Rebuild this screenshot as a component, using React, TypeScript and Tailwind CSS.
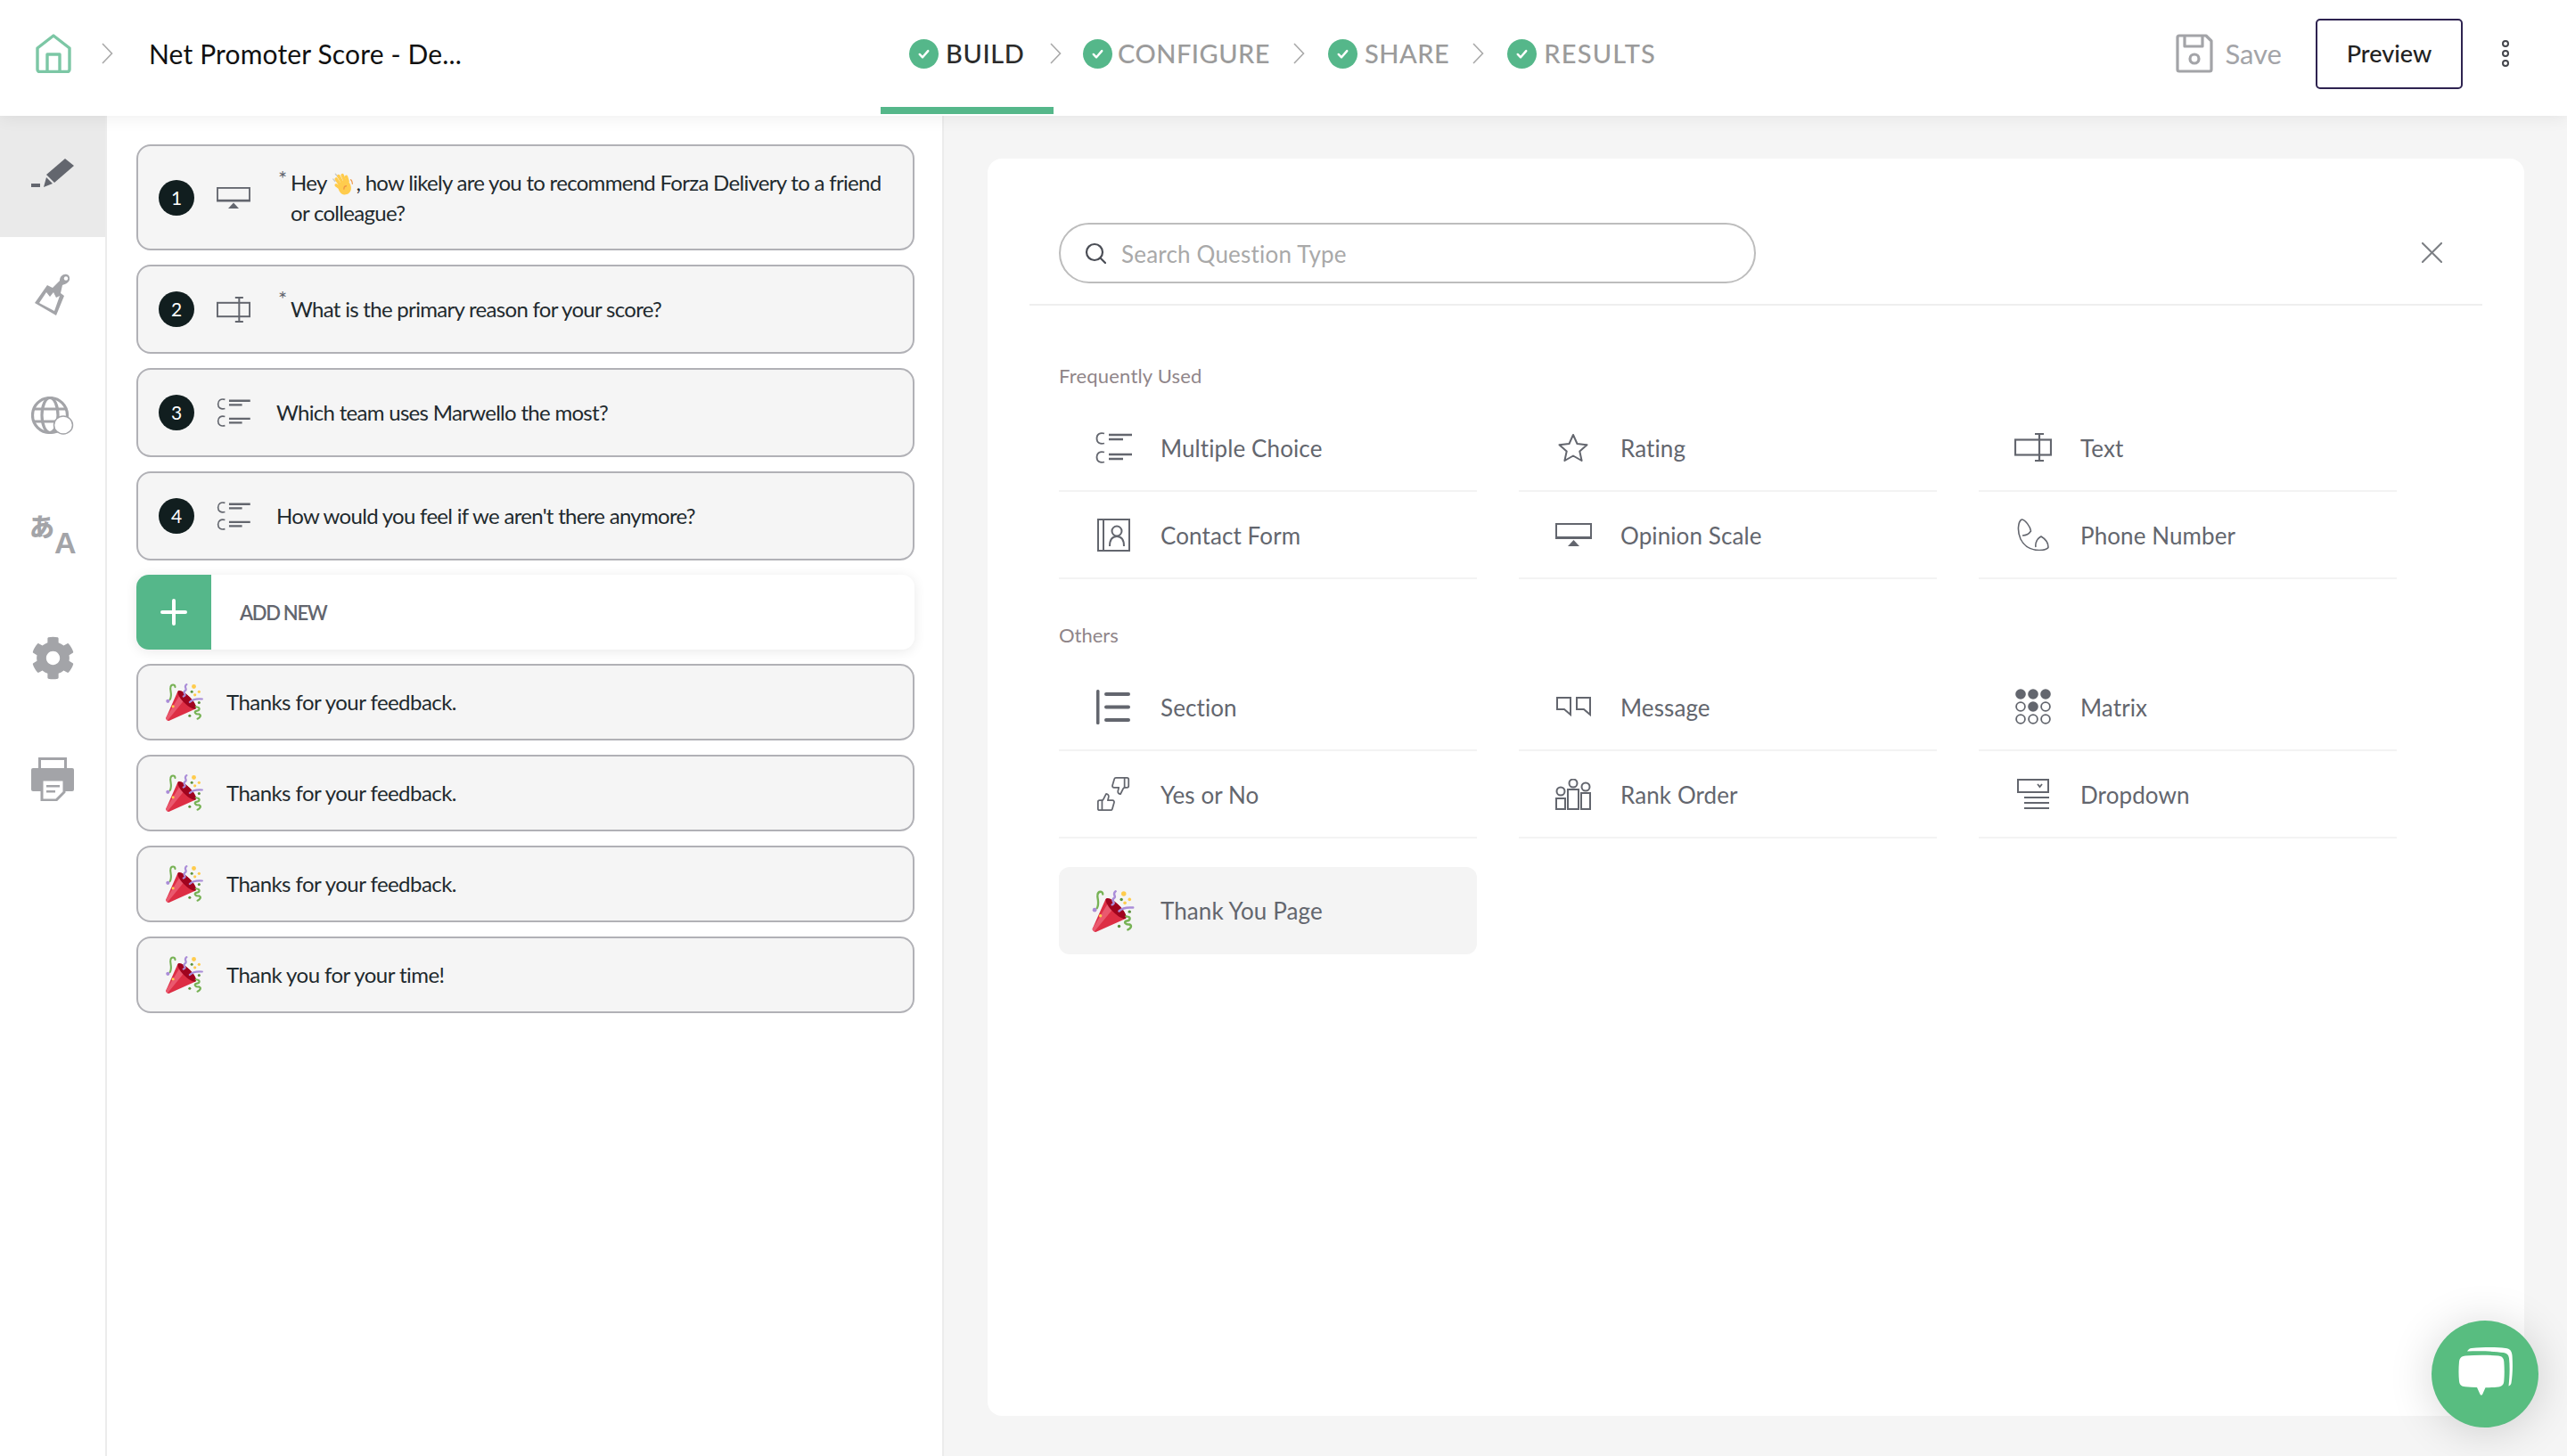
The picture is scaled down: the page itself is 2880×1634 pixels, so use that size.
import { FaCog } from "react-icons/fa"

const Popper = ({ className }: { className: string }) => (
  <svg viewBox="0 0 36 36" className={className} fill="none">
    <path fill="#DD2E44" d="M11.626 7.488c-.112.112-.197.247-.268.395l-.008-.008L.134 33.141l.011.011c-.208.403.14 1.223.853 1.937.713.713 1.533 1.061 1.936.853l.01.01L28.21 24.735l-.008-.009c.147-.07.282-.155.395-.269 1.562-1.562-.971-6.627-5.656-11.313-4.687-4.686-9.752-7.218-11.315-5.656z" />
    <path fill="#EA596E" d="M13 12L.416 32.506l-.282.635.011.011c-.208.403.14 1.223.853 1.937.232.232.473.408.709.557L17 17l-4-5z" />
    <path fill="#A0041E" d="M23.012 13.066c4.67 4.672 7.263 9.652 5.789 11.124-1.473 1.474-6.453-1.118-11.126-5.788-4.671-4.672-7.263-9.654-5.79-11.127 1.474-1.473 6.454 1.119 11.127 5.791z" />
    <path stroke="#77B255" strokeWidth="1.800" strokeLinecap="round" d="M4 15.500C6.500 11 4 7 4.500 4c.5-3.500 4.500-3.500 4.500-.5" />
    <path stroke="#AA8DD8" strokeWidth="1.900" strokeLinecap="round" d="M17 12.500c4-1.500-1.500-3.500 1.500-5.500C21.500 5.500 16.500 3.500 20 1" />
    <path stroke="#AA8DD8" strokeWidth="1.900" strokeLinecap="round" d="M23 18c3-3 7-3.500 12-3" />
    <path stroke="#77B255" strokeWidth="1.900" strokeLinecap="round" d="M29 22.500c5 .5 3.500 3.500.5 4-3 .5-1 3.500 2.500 3 2.500 1 1 3.500-1.500 4.500" />
    <circle cx="2" cy="17" r="1.800" fill="#AA8DD8" />
    <circle cx="7" cy="22" r="1.300" fill="#FFCC4D" />
    <circle cx="27" cy="3" r="2.100" fill="#FFCC4D" />
    <circle cx="32" cy="8" r="1.400" fill="#FFCC4D" />
    <circle cx="28" cy="11" r="1.400" fill="#FFCC4D" />
    <circle cx="25" cy="8" r="1.300" fill="#5C913B" />
    <circle cx="32" cy="18.500" r="1.300" fill="#5C913B" />
    <circle cx="23" cy="31" r="1.300" fill="#5C913B" />
  </svg>
)

const Wave = () => (
  <svg viewBox="0 0 30 30" className="mx-[1px] inline-block h-[26px] w-[26px] align-[-6px]" fill="none">
    <path stroke="#c9c9c9" strokeWidth="1.500" strokeLinecap="round" d="M5 1.500 9 6M2 8l2.500 3" />
    <g stroke="#FFCC4D" strokeWidth="4" strokeLinecap="round">
      <path d="M10 14 6 8" />
      <path d="M13 11 9 4" />
      <path d="M17 10 14 3" />
      <path d="M21 11 19 5" />
      <path d="M10 19 6 16" />
    </g>
    <path fill="#FFCC4D" d="M9 15c2-4 8-6 12-4 3 2 5 7 4 11-1 5-6 7-10 6-4-1-8-8-6-13z" />
    <path stroke="#EF9645" strokeWidth="1.500" strokeLinecap="round" d="M25 9c1 1 2 3 2 5M19 17c-2 0-3 2-3 4" />
  </svg>
)

const MultiIcon = ({ className }: { className: string }) => (
  <svg viewBox="0 0 41 35" className={className} fill="none" stroke="currentColor">
    <path strokeWidth="1.800" d="M10 1.500C5 0 1.500 2.500 1.500 7S5 14 10 12.500M10 22.500C5 21 1.500 23.500 1.500 28S5 35 10 33.500" />
    <path strokeWidth="2.500" d="M15 3h26M15 8h16M15 25h26M15 30h16" />
  </svg>
)
const ScaleIcon = ({ className }: { className: string }) => (
  <svg viewBox="0 0 41 26" className={className} fill="none">
    <rect x="1" y="1" width="39" height="15" stroke="currentColor" strokeWidth="2" />
    <path d="M0 15.500h41v2.500H0z" fill="currentColor" />
    <path d="M20.500 19 27 26H14z" fill="currentColor" />
  </svg>
)
const TextIcon = ({ className }: { className: string }) => (
  <svg viewBox="0 0 42 32" className={className} fill="none" stroke="currentColor" strokeWidth="2.200">
    <rect x="1" y="7.500" width="40" height="17" />
    <path d="M28 1v30M23 1h10M23 31h10" />
  </svg>
)
const StarIcon = ({ className }: { className: string }) => (
  <svg viewBox="0 0 34 32" className={className} fill="none" stroke="currentColor" strokeWidth="2" strokeLinejoin="round">
    <path d="M17 2l4.500 10 11 1.200-8.200 7.300L26.600 31 17 25.500 7.400 31l2.300-10.500L1.500 13.200l11-1.200z" />
  </svg>
)
const ContactIcon = ({ className }: { className: string }) => (
  <svg viewBox="0 0 37 37" className={className} fill="none" stroke="currentColor" strokeWidth="2">
    <rect x="1" y="1" width="35" height="35" />
    <path d="M7 1v35" />
    <circle cx="22" cy="14" r="5.500" />
    <path d="M14 31c0-8 3-11 8-11s8 3 8 11" />
  </svg>
)
const PhoneIcon = ({ className }: { className: string }) => (
  <svg viewBox="0 0 36 36" className={className} fill="none" stroke="currentColor" strokeWidth="1.600" strokeLinejoin="round">
    <path d="M5 1C1 4 0 14 4 23c4 8 12 12.500 21 12.500 5 0 10-1.500 10-3.500 0-4-3-9-8-12-4 2-7 7-6 12" />
    <path d="M5 1c4 0 10 8 10.500 13-2 3-6 5-9.500 5" />
  </svg>
)
const SectionIcon = ({ className }: { className: string }) => (
  <svg viewBox="0 0 38 39" className={className} fill="currentColor">
    <rect x="0" y="0" width="3.500" height="39" rx="1.500" />
    <rect x="9" y="3" width="29" height="4" rx="2" />
    <rect x="9" y="17.500" width="29" height="4" rx="2" />
    <rect x="9" y="32" width="29" height="4" rx="2" />
  </svg>
)
const MessageIcon = ({ className }: { className: string }) => (
  <svg viewBox="0 0 39 22" className={className} fill="none" stroke="currentColor" strokeWidth="2">
    <path d="M1 1h15v19l-7-6H1zM23 1h15v19l-7-6h-8z" />
  </svg>
)
const YesNoIcon = ({ className }: { className: string }) => (
  <svg viewBox="0 0 38 40" className={className} fill="none" stroke="currentColor" strokeWidth="1.900" strokeLinejoin="round" strokeLinecap="round">
    <g transform="translate(0 18) scale(.92)">
      <path d="M7 10v12" />
      <path d="M15 5.880 14 10h5.830a2 2 0 0 1 1.920 2.560l-2.330 8A2 2 0 0 1 17.500 22H4a2 2 0 0 1-2-2v-8a2 2 0 0 1 2-2h2.760a2 2 0 0 0 1.790-1.110L12 2a3.130 3.130 0 0 1 3 3.880Z" />
    </g>
    <g transform="translate(16 0) scale(.92)">
      <path d="M17 14V2" />
      <path d="M9 18.120 10 14H4.170a2 2 0 0 1-1.920-2.560l2.330-8A2 2 0 0 1 6.500 2H20a2 2 0 0 1 2 2v8a2 2 0 0 1-2 2h-2.760a2 2 0 0 0-1.790 1.110L12 22a3.130 3.130 0 0 1-3-3.880Z" />
    </g>
  </svg>
)
const RankIcon = ({ className }: { className: string }) => (
  <svg viewBox="0 0 40 35" className={className} fill="none" stroke="currentColor" strokeWidth="2">
    <circle cx="20" cy="5" r="4.500" />
    <rect x="14" y="12" width="12" height="22" />
    <circle cx="6" cy="14" r="4.500" />
    <rect x="1" y="22" width="10" height="12" />
    <circle cx="34" cy="9" r="4.500" />
    <rect x="29" y="16" width="10" height="18" />
  </svg>
)
const MatrixIcon = ({ className }: { className: string }) => (
  <svg viewBox="0 0 40 40" className={className}>
    {[6, 20, 34].map((cy, r) =>
      [6, 20, 34].map((cx, c) => {
        const filled = r === 0 || (r === 1 && c === 1)
        return (
          <circle
            key={`${r}-${c}`}
            cx={cx}
            cy={cy}
            r={filled ? 5.800 : 4.900}
            fill={filled ? "currentColor" : "none"}
            stroke={filled ? "none" : "currentColor"}
            strokeWidth="1.800"
          />
        )
      }),
    )}
  </svg>
)
const DropdownIcon = ({ className }: { className: string }) => (
  <svg viewBox="0 0 36 34" className={className} fill="none" stroke="currentColor">
    <rect x="1" y="1" width="34" height="14" strokeWidth="2" />
    <path strokeWidth="1.800" d="M23 6l2.500 3L28 6" />
    <path strokeWidth="2.200" d="M8 21h28M8 27h28M8 33h28" />
  </svg>
)

const Check = () => (
  <span className="flex h-[33px] w-[33px] shrink-0 items-center justify-center rounded-full bg-[#55b78a]">
    <svg viewBox="0 0 20 20" className="h-[19px] w-[19px]" fill="none" stroke="#fff" strokeWidth="2.600" strokeLinecap="round" strokeLinejoin="round">
      <path d="M5 10.500l3.500 3.500L15 6.500" />
    </svg>
  </span>
)

const Chevron = ({ className }: { className: string }) => (
  <svg viewBox="0 0 13 24" className={className} fill="none" stroke="#a9a9a9" strokeWidth="1.600">
    <path d="M1 1l10.500 11L1 23" />
  </svg>
)

function Header() {
  return (
    <header className="relative z-10 flex h-[130px] shrink-0 items-start bg-white shadow-[0_2px_18px_rgba(0,0,0,0.07)]">
      <div className="flex h-[120px] w-[988px] shrink-0 items-center">
        <svg viewBox="0 0 40 44" className="ml-[40px] h-[44px] w-[40px]" fill="none" stroke="#7cc7a5" strokeWidth="3.400" strokeLinejoin="round">
          <path d="M2 16 20 2l18 14v24a2.500 2.500 0 0 1-2.500 2.500h-31A2.500 2.500 0 0 1 2 40z" />
          <path d="M13 42V23h14v19" />
        </svg>
        <Chevron className="ml-[34px] h-[24px] w-[13px]" />
        <span className="ml-[40px] text-[30px] tracking-[0.15px] text-[#111]">Net Promoter Score - De...</span>
      </div>
      <div className="flex h-[128px] items-center">
        <div className="flex h-[128px] w-[194px] items-center gap-[8px] border-b-[8px] border-[#55b78a] pl-[32px]">
          <Check />
          <span className="text-[29px] font-medium tracking-[0.6px] text-[#2b2b2b]">BUILD</span>
        </div>
        <Chevron className="-ml-[4px] mb-[8px] h-[24px] w-[13px]" />
        <div className="mb-[8px] ml-[24px] flex items-center gap-[6px]">
          <Check />
          <span className="text-[29px] font-medium tracking-[0.5px] text-[#9b9b9b]">CONFIGURE</span>
        </div>
        <Chevron className="mb-[8px] ml-[26px] h-[24px] w-[13px]" />
        <div className="mb-[8px] ml-[26px] flex items-center gap-[8px]">
          <Check />
          <span className="text-[29px] font-medium tracking-[0.5px] text-[#9b9b9b]">SHARE</span>
        </div>
        <Chevron className="mb-[8px] ml-[26px] h-[24px] w-[13px]" />
        <div className="mb-[8px] ml-[26px] flex items-center gap-[8px]">
          <Check />
          <span className="text-[29px] font-medium tracking-[1.2px] text-[#9b9b9b]">RESULTS</span>
        </div>
      </div>
      <div className="ml-auto flex h-[120px] items-center pr-[64px]">
        <svg viewBox="0 0 42 44" className="h-[44px] w-[42px]" fill="none" stroke="#a3a4a8" strokeWidth="3.200" strokeLinejoin="round">
          <path d="M2 4a2 2 0 0 1 2-2h30l6 6v32a2 2 0 0 1-2 2H4a2 2 0 0 1-2-2z" />
          <path d="M10 2v12h20V2" />
          <circle cx="21" cy="28" r="5" />
        </svg>
        <span className="ml-[13px] text-[31px] text-[#a3a4a8]">Save</span>
        <button className="ml-[38px] h-[79px] w-[165px] rounded-[5px] border-2 border-[#2e2350] text-[27px] font-medium text-[#222]">Preview</button>
        <svg viewBox="0 0 10 30" className="ml-[43px] h-[30px] w-[10px]" fill="none" stroke="#44464c" strokeWidth="2">
          <circle cx="5" cy="4" r="3" />
          <circle cx="5" cy="15" r="3" />
          <circle cx="5" cy="26" r="3" />
        </svg>
      </div>
    </header>
  )
}

function Rail() {
  return (
    <aside className="flex w-[120px] shrink-0 flex-col border-r-2 border-[#ececec] bg-white text-[#a3a4a8]">
      <div className="flex h-[136px] items-center justify-center bg-[#eaeaea] pb-[7px]">
        <svg viewBox="0 0 48 34" className="h-[34px] w-[48px]" fill="#63666e">
          <rect x="0" y="28" width="10" height="4" />
          <path d="M38 0 48 8 26 27 17 18z" />
          <path d="M14 32l3-11 7 7z" />
        </svg>
      </div>
      <div className="flex h-[136px] items-center justify-center pb-[7px]">
        <svg viewBox="0 0 40 47" className="h-[47px] w-[40px]" fill="currentColor">
          <path d="M0 33 14 13l6 3 8-8c0-5 4-8 8-7 4 1 4 7 1 9-2 2-5 2-6 3l-2 9 4 3-9 22z" />
          <circle cx="35" cy="5.500" r="2.200" fill="#fff" />
          <path fill="#fff" d="M5 33l8-12 4 5 4-5 3 6 4-2-6 17z" />
        </svg>
      </div>
      <div className="flex h-[136px] items-center justify-center pb-[7px]">
        <svg viewBox="0 0 48 44" className="h-[44px] w-[48px]" fill="none" stroke="currentColor" strokeWidth="3.200">
          <circle cx="21" cy="21" r="19.500" />
          <ellipse cx="21" cy="21" rx="9" ry="19.500" />
          <path d="M2 14h38M2 28h38" />
          <ellipse cx="36" cy="32" rx="10.500" ry="10" fill="#fff" strokeWidth="1.500" />
        </svg>
      </div>
      <div className="flex h-[136px] items-center justify-center pb-[14px]">
        <div className="flex h-[47px] w-[52px] items-end leading-none">
          <span className="mb-[19px] [font-family:'Noto_Sans_CJK_JP',sans-serif] text-[28px] font-black leading-[28px]">あ</span>
          <span className="[font-family:'Liberation_Sans',sans-serif] text-[34px] font-bold leading-[28px]">A</span>
        </div>
      </div>
      <div className="flex h-[136px] items-center justify-center pb-[7px]">
        <FaCog className="h-[49px] w-[49px]" />
      </div>
      <div className="flex h-[136px] items-center justify-center pb-[7px]">
        <svg viewBox="0 0 48 49" className="h-[49px] w-[48px]" fill="currentColor">
          <path d="M8 0h32v14H8z" />
          <path fill="#fff" d="M11 3h26v9H11z" />
          <path d="M2 12h44a2 2 0 0 1 2 2v22a2 2 0 0 1-2 2H2a2 2 0 0 1-2-2V14a2 2 0 0 1 2-2z" />
          <path fill="#fff" d="M12 25h25v14l-9 9H12z" stroke="#a3a4a8" strokeWidth="3" />
          <path d="M17 31h15v2.500H17zM17 37h10v2.500H17z" />
        </svg>
      </div>
    </aside>
  )
}

type Question = { n: number; required?: boolean; kind: "scale" | "text" | "multi"; h: string; text: React.ReactNode }

const questions: Question[] = [
  {
    n: 1,
    required: true,
    kind: "scale",
    h: "h-[119px]",
    text: (
      <>
        Hey <Wave />, how likely are you to recommend Forza Delivery to a friend
        <br />
        or colleague?
      </>
    ),
  },
  { n: 2, required: true, kind: "text", h: "h-[100px]", text: "What is the primary reason for your score?" },
  { n: 3, kind: "multi", h: "h-[100px]", text: "Which team uses Marwello the most?" },
  { n: 4, kind: "multi", h: "h-[100px]", text: "How would you feel if we aren't there anymore?" },
]

const endings = ["Thanks for your feedback.", "Thanks for your feedback.", "Thanks for your feedback.", "Thank you for your time!"]

function QuestionList() {
  return (
    <section className="flex w-[939px] shrink-0 flex-col gap-[16px] border-r-2 border-[#ececec] bg-white pl-[33px] pr-[31px] pt-[32px]">
      {questions.map((q) => (
        <div key={q.n} className={`flex ${q.h} items-center rounded-[16px] border-2 border-[#b1b1b6] bg-[#f5f5f5] pl-[23px] pr-[10px]`}>
          <span className="flex h-[40px] w-[40px] shrink-0 items-center justify-center rounded-full bg-[#111e1f] text-[21px] text-white">{q.n}</span>
          <span className="ml-[25px] flex w-[38px] shrink-0 justify-center text-[#63666e]">
            {q.kind === "scale" && <ScaleIcon className="h-[24px] w-[38px]" />}
            {q.kind === "text" && <TextIcon className="h-[29px] w-[38px]" />}
            {q.kind === "multi" && <MultiIcon className="h-[32px] w-[38px]" />}
          </span>
          {q.required ? (
            <>
              <span className="ml-[31px] w-[14px] shrink-0 self-start pt-[24px] text-[24px] leading-none text-[#63666e]">*</span>
              <p className="whitespace-nowrap text-[24px] leading-[34px] tracking-[-0.7px] text-[#1f2a2e]">{q.text}</p>
            </>
          ) : (
            <p className="ml-[29px] text-[24px] leading-[34px] tracking-[-0.7px] text-[#1f2a2e]">{q.text}</p>
          )}
        </div>
      ))}
      <div className="flex h-[84px] items-center overflow-hidden rounded-[14px] bg-white shadow-[0_2px_14px_rgba(0,0,0,0.09)]">
        <span className="flex h-full w-[84px] items-center justify-center bg-[#55b78a]">
          <svg viewBox="0 0 30 30" className="h-[30px] w-[30px]" stroke="#fff" strokeWidth="4" strokeLinecap="round">
            <path d="M15 2v26M2 15h26" />
          </svg>
        </span>
        <span className="ml-[32px] text-[22px] font-semibold tracking-[-1.3px] text-[#63666e]">ADD NEW</span>
      </div>
      {endings.map((t, i) => (
        <div key={i} className="flex h-[86px] items-center rounded-[16px] border-2 border-[#b1b1b6] bg-[#f5f5f5] pl-[30px]">
          <Popper className="h-[42px] w-[44px] shrink-0" />
          <span className="ml-[25px] text-[24px] tracking-[-0.55px] text-[#1f2a2e]">{t}</span>
        </div>
      ))}
    </section>
  )
}

type Item = { label: string; icon: React.ReactNode }

const frequent: Item[] = [
  { label: "Multiple Choice", icon: <MultiIcon className="h-[35px] w-[41px]" /> },
  { label: "Rating", icon: <StarIcon className="h-[32px] w-[34px]" /> },
  { label: "Text", icon: <TextIcon className="h-[32px] w-[42px]" /> },
  { label: "Contact Form", icon: <ContactIcon className="h-[37px] w-[37px]" /> },
  { label: "Opinion Scale", icon: <ScaleIcon className="h-[26px] w-[41px]" /> },
  { label: "Phone Number", icon: <PhoneIcon className="h-[36px] w-[36px]" /> },
]

const others: Item[] = [
  { label: "Section", icon: <SectionIcon className="h-[39px] w-[38px]" /> },
  { label: "Message", icon: <MessageIcon className="h-[22px] w-[39px]" /> },
  { label: "Matrix", icon: <MatrixIcon className="h-[40px] w-[40px]" /> },
  { label: "Yes or No", icon: <YesNoIcon className="h-[40px] w-[38px]" /> },
  { label: "Rank Order", icon: <RankIcon className="h-[35px] w-[40px]" /> },
  { label: "Dropdown", icon: <DropdownIcon className="h-[34px] w-[36px]" /> },
]

function TypeRow({ item }: { item: Item }) {
  return (
    <div className="flex h-[98px] items-center border-b-2 border-[#f3f3f3]">
      <span className="ml-[20px] flex w-[82px] justify-center text-[#63666e]">{item.icon}</span>
      <span className="ml-[12px] pt-[2px] text-[26px] tracking-[0.1px] text-[#63666e]">{item.label}</span>
    </div>
  )
}

function TypePanel() {
  return (
    <div className="h-[1411px] rounded-[16px] bg-white pt-[72px]">
      <div className="mx-[47px] flex h-[93px] items-start border-b-2 border-[#eeeeee] pb-[25px]">
        <div className="ml-[33px] flex h-[68px] w-[782px] items-center rounded-full border-2 border-[#bdbdbd] pl-[27px]">
          <svg viewBox="0 0 24 24" className="h-[24px] w-[24px]" fill="none" stroke="#4a4d55" strokeWidth="2.200" strokeLinecap="round">
            <circle cx="11" cy="11" r="9" />
            <path d="M17.500 17.500 23 23" />
          </svg>
          <span className="ml-[17px] pt-[2px] text-[26px] tracking-[0.2px] text-[#a9a9a9]">Search Question Type</span>
        </div>
        <svg viewBox="0 0 24 24" className="ml-[747px] mt-[22px] h-[23px] w-[23px]" fill="none" stroke="#7d8085" strokeWidth="2.200" strokeLinecap="round">
          <path d="M1 1l22 22M23 1 1 23" />
        </svg>
      </div>
      <div className="pl-[80px] pt-[65px]">
        <p className="text-[22px] leading-[28px] tracking-[0.2px] text-[#8f8589]">Frequently Used</p>
        <div className="mt-[18px] grid w-[1501px] grid-cols-3 gap-x-[47px]">
          {frequent.map((item) => (
            <TypeRow key={item.label} item={item} />
          ))}
        </div>
        <p className="mt-[49px] text-[22px] leading-[28px] text-[#8f8589]">Others</p>
        <div className="mt-[18px] grid w-[1501px] grid-cols-3 gap-x-[47px]">
          {others.map((item) => (
            <TypeRow key={item.label} item={item} />
          ))}
        </div>
        <div className="mt-[32px] flex h-[98px] w-[469px] items-center rounded-[12px] bg-[#f4f4f4]">
          <span className="ml-[20px] flex w-[82px] justify-center">
            <Popper className="h-[47px] w-[48px]" />
          </span>
          <span className="ml-[12px] text-[26px] tracking-[0.1px] text-[#63666e]">Thank You Page</span>
        </div>
      </div>
    </div>
  )
}

export default function App() {
  return (
    <div className="relative flex h-[1634px] w-[2880px] flex-col overflow-hidden bg-[#f5f5f5] [font-family:Lato,sans-serif]">
      <Header />
      <div className="flex min-h-0 flex-1">
        <Rail />
        <QuestionList />
        <main className="flex-1 pl-[49px] pr-[48px] pt-[48px]">
          <TypePanel />
        </main>
      </div>
      {/* chat launcher */}
      <button className="absolute left-[2728px] top-[1482px] flex h-[120px] w-[120px] items-center justify-center rounded-full bg-[#58bd80] shadow-[0_4px_50px_rgba(0,0,0,0.16)]">
        <svg viewBox="0 0 62 60" className="h-[60px] w-[62px]" fill="#fff">
          <path d="M16 1c14-1.200 28-1.200 38 0 5 .5 7 3 7.500 8 .8 11 .5 22-1 31-.3 2-1.500 3-3 3.500 1.200-11 1.500-22 .5-31-.5-4-2.500-6-6.500-6.500C42 4.500 28 4 11 4.500 12 2.500 14 1.200 16 1z" />
          <path d="M9 9.500c12-1 26-1 37 0 4 .4 6 2.500 6.300 6.500.6 8 .6 15 0 22-.4 4-2.300 6-6.300 6.400-5 .5-10 .7-14.500.8l-3.300 7.500c-.7 1.500-2 1.500-2.700 0L22 45c-4.500-.1-9-.3-13.200-.7C4.500 44 2.500 42 2 38c-.7-7-.7-14 0-22 .4-4 2.700-6.100 7-6.500z" />
        </svg>
      </button>
    </div>
  )
}
